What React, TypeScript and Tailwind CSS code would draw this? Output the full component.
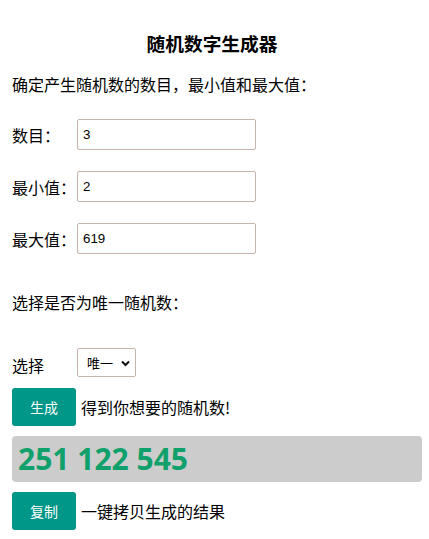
import React from "react";

export default function App() {
  const cjk = { fontFamily: '"Noto Sans CJK SC", "Noto Sans", sans-serif' };
  return (
    <div
      className="w-[429px] h-[539px] bg-white text-black pl-[12px] pr-[7px] flex flex-col text-[16px]"
      style={cjk}
    >
      <h3 className="mt-[31px] h-[24px] leading-[24px] text-center text-[18.7px] font-bold pr-[10px]">
        随机数字生成器
      </h3>
      <p className="mt-[17px] h-[24px] leading-[24px]">确定产生随机数的数目，最小值和最大值：</p>

      <div className="mt-[23px] flex items-center h-[31px]">
        <span className="w-[65px] shrink-0 leading-[24px]">数目：</span>
        <input
          defaultValue="3"
          className="w-[179px] h-[31px] border border-[#c4b4ab] rounded-[2px] px-[5px] text-[13.33px] outline-none"
          style={{ fontFamily: '"Liberation Sans", Arial, sans-serif' }}
        />
      </div>
      <div className="mt-[21px] flex items-center h-[31px]">
        <span className="w-[65px] shrink-0 leading-[24px]">最小值：</span>
        <input
          defaultValue="2"
          className="w-[179px] h-[31px] border border-[#c4b4ab] rounded-[2px] px-[5px] text-[13.33px] outline-none"
          style={{ fontFamily: '"Liberation Sans", Arial, sans-serif' }}
        />
      </div>
      <div className="mt-[21px] flex items-center h-[31px]">
        <span className="w-[65px] shrink-0 leading-[24px]">最大值：</span>
        <input
          defaultValue="619"
          className="w-[179px] h-[31px] border border-[#c4b4ab] rounded-[2px] px-[5px] text-[13.33px] outline-none"
          style={{ fontFamily: '"Liberation Sans", Arial, sans-serif' }}
        />
      </div>

      <p className="mt-[36px] h-[24px] leading-[24px]">选择是否为唯一随机数：</p>

      <div className="mt-[34px] flex items-center h-[29px]">
        <span className="w-[65px] shrink-0 leading-[24px] pt-[4px]">选择</span>
        <div className="relative w-[59px] h-[29px] border border-[#c4b4ab] rounded-[2px] flex items-center text-[13px]">
          <span className="pl-[9px]">唯一</span>
          <svg
            className="absolute right-[5px] top-[11px]"
            width="9"
            height="7"
            viewBox="0 0 9 7"
          >
            <path d="M1 1.5 L4.5 5 L8 1.5" stroke="#111" strokeWidth="2" fill="none" />
          </svg>
        </div>
      </div>

      <div className="mt-[11px] flex items-center h-[38px]">
        <button className="w-[64px] h-[38px] bg-[#009688] text-white text-[14px] rounded-[3px] shrink-0">
          生成
        </button>
        <span className="ml-[5px] leading-[24px]">得到你想要的随机数!</span>
      </div>

      <div className="mt-[10px] h-[46px] bg-[#cccccc] rounded-[4px] flex items-center pl-[6px]">
        <span
          className="text-[30px] font-bold text-[#0fa06b] leading-none"
          style={{ fontFamily: '"Open Sans", "Noto Sans", sans-serif' }}
        >
          251 122 545
        </span>
      </div>

      <div className="mt-[10px] flex items-center h-[38px]">
        <button className="w-[64px] h-[38px] bg-[#009688] text-white text-[14px] rounded-[3px] shrink-0">
          复制
        </button>
        <span className="ml-[5px] leading-[24px]">一键拷贝生成的结果</span>
      </div>
    </div>
  );
}
